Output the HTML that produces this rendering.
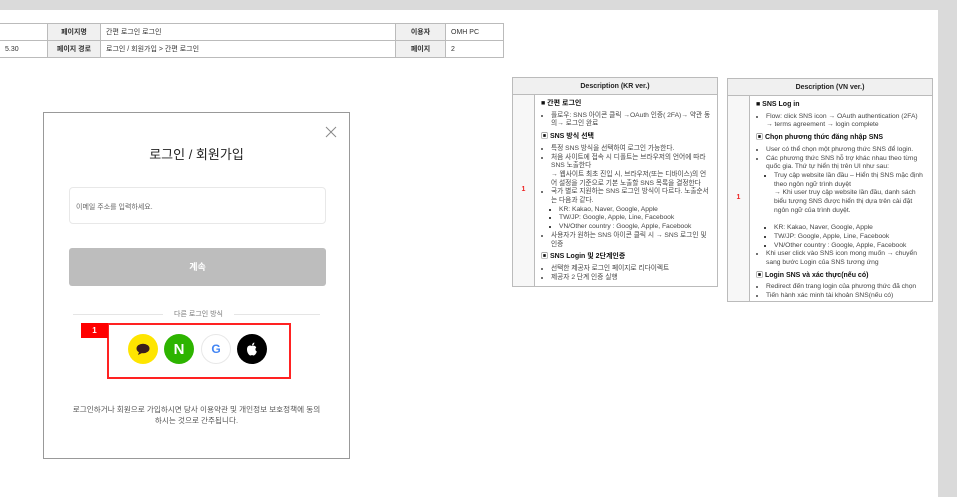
<!DOCTYPE html>
<html><head><meta charset="utf-8">
<style>
*{margin:0;padding:0;box-sizing:border-box}
body{width:957px;height:497px;overflow:hidden;background:#fff;position:relative;font-family:"Liberation Sans","Noto Sans CJK KR",sans-serif;color:#333}
.abs{position:absolute}
table.hd{position:absolute;left:-1px;top:23px;border-collapse:collapse;font-size:7px}
table.hd td{border:1px solid #bbb;height:17px;padding:0 5px;white-space:nowrap}
table.hd td.h{background:#f0f0f0;font-weight:bold;text-align:center}
.box{position:absolute;border:1px solid #bbb;background:#fff;font-size:6.7px;line-height:8.7px;color:#444}
.box .t{height:17px;background:#f0f0f0;border-bottom:1px solid #bbb;text-align:center;font-weight:bold;font-size:7px;line-height:17px;color:#222}
.box .n{position:absolute;left:0;top:17px;bottom:0;width:22px;border-right:1px solid #bbb;background:#f7f7f7;color:#e22;font-weight:bold;font-size:7px;display:flex;align-items:center;justify-content:center}
.box .c{position:absolute;left:28px;top:22px;right:6px}
.box b{display:block;font-size:7px;color:#111;margin:0 0 3px}
.box ul{margin:0 0 4px 10px;list-style:disc}
.box ul ul{margin:0 0 0 8px}
.ic{position:absolute;width:30px;height:30px;border-radius:50%;top:334px;display:flex;align-items:center;justify-content:center}
</style></head><body>
<div class="abs" style="left:0;top:0;width:957px;height:10px;background:#dadada"></div>
<div class="abs" style="left:938px;top:0;width:19px;height:497px;background:#dadada"></div>
<table class="hd">
<tr><td style="width:48px"></td><td class="h" style="width:53px">페이지명</td><td style="width:295px">간편 로그인 로그인</td><td class="h" style="width:50px">이용자</td><td style="width:58px">OMH PC</td></tr>
<tr><td>5.30</td><td class="h">페이지 경로</td><td>로그인 / 회원가입 &gt; 간편 로그인</td><td class="h">페이지</td><td>2</td></tr>
</table>

<div class="abs" style="left:43px;top:112px;width:307px;height:347px;border:1px solid #999;background:#fff"></div>
<svg class="abs" style="left:325px;top:126px" width="12" height="12"><path d="M1 1L11 11M11 1L1 11" stroke="#888" stroke-width="1"/></svg>
<div class="abs" style="left:43px;top:144px;width:307px;text-align:center;font-size:13px;color:#222">로그인 / 회원가입</div>
<div class="abs" style="left:69px;top:187px;width:257px;height:37px;border:1px solid #e8e8e8;border-radius:4px;font-size:7px;color:#666;padding:14px 6px">이메일 주소를 입력하세요.</div>
<div class="abs" style="left:69px;top:248px;width:257px;height:38px;background:#bdbdbd;border-radius:3px;color:#fff;font-weight:bold;font-size:9px;text-align:center;line-height:38px">계속</div>
<div class="abs" style="left:73px;top:314px;width:90px;height:1px;background:#e5e5e5"></div>
<div class="abs" style="left:234px;top:314px;width:86px;height:1px;background:#e5e5e5"></div>
<div class="abs" style="left:163px;top:309px;width:71px;text-align:center;font-size:7px;color:#777">다른 로그인 방식</div>
<div class="abs" style="left:107px;top:323px;width:184px;height:56px;border:2px solid #f22"></div>
<div class="abs" style="left:81px;top:323px;width:27px;height:15px;background:#f00;color:#fff;font-weight:bold;font-size:8px;line-height:15px;text-align:center">1</div>
<div class="ic" style="left:128px;background:#fee500"><svg width="14" height="12"><ellipse cx="7" cy="5.5" rx="6.5" ry="4.8" fill="#3a1d1d"/><path d="M3 9l-1 3 4-2z" fill="#3a1d1d"/></svg></div>
<div class="ic" style="left:164px;background:#2db400;color:#fff;font-weight:bold;font-size:15px">N</div>
<div class="ic" style="left:201px;background:#fff;border:1px solid #e8e8e8;font-weight:bold;font-size:12px"><span style="color:#4285f4">G</span></div>
<div class="ic" style="left:237px;background:#000"><svg width="12" height="14" viewBox="0 0 12 14"><path d="M6 4C4 3 1 3.5 1 7.5c0 3 2 6 3.5 6 1 0 1-.5 1.5-.5s.5.5 1.5.5c1.5 0 3-2.5 3.3-4-1.5-.7-2-2.7-.5-4C9.5 4.2 8 3 6 4z M6 3.5C6 2 7 .8 8.3.5 8.5 2 7.3 3.5 6 3.5z" fill="#fff"/></svg></div>
<div class="abs" style="left:43px;top:405px;width:307px;text-align:center;font-size:7.6px;line-height:10.5px;color:#555">로그인하거나 회원으로 가입하시면 당사 이용약관 및 개인정보 보호정책에 동의<br>하시는 것으로 간주됩니다.</div>

<div class="box" style="left:512px;top:77px;width:206px;height:210px">
<div class="t">Description (KR ver.)</div><div class="n">1</div>
<div class="c">
<b>■ 간편 로그인</b>
<ul><li>플로우: SNS 아이콘 클릭 →OAuth 인증( 2FA)→ 약관 동의→ 로그인 완료</li></ul>
<b>▣ SNS 방식 선택</b>
<ul><li>특정 SNS 방식을 선택하여 로그인 가능한다.</li><li>처음 사이트에 접속 시 디폴트는 브라우저의 언어에 따라 SNS 노출한다<br>→ 웹사이트 최초 진입 시, 브라우저(또는 디바이스)의 언어 설정을 기준으로 기본 노출할 SNS 목록을 결정한다</li><li>국가 별로 지원하는 SNS 로그인 방식이 다르다. 노출순서는 다음과 같다.<ul style="list-style:square"><li>KR: Kakao, Naver, Google, Apple</li><li>TW/JP: Google, Apple, Line, Facebook</li><li>VN/Other country : Google, Apple, Facebook</li></ul></li><li>사용자가 원하는 SNS 아이콘 클릭 시 → SNS 로그인 및 인증</li></ul>
<b>▣ SNS Login 및 2단계인증</b>
<ul><li>선택한 제공자 로그인 페이지로 리다이렉트</li><li>제공자 2 단계 인증 실행</li></ul>
</div></div>

<div class="box" style="left:727px;top:78px;width:206px;height:224px">
<div class="t">Description (VN ver.)</div><div class="n">1</div>
<div class="c">
<b>■ SNS Log in</b>
<ul><li>Flow: click SNS icon → OAuth authentication (2FA) → terms agreement → login complete</li></ul>
<b>▣ Chọn phương thức đăng nhập SNS</b>
<ul><li>User có thể chọn một phương thức SNS để login.</li><li>Các phương thức SNS hỗ trợ khác nhau theo từng quốc gia. Thứ tự hiển thị trên UI như sau:<ul style="list-style:square"><li>Truy cập website lần đầu – Hiển thị SNS mặc định theo ngôn ngữ trình duyệt<br>→ Khi user truy cập website lần đầu, danh sách biểu tượng SNS được hiển thị dựa trên cài đặt ngôn ngữ của trình duyệt.<br><br></li><li>KR: Kakao, Naver, Google, Apple</li><li>TW/JP: Google, Apple, Line, Facebook</li><li>VN/Other country : Google, Apple, Facebook</li></ul></li><li>Khi user click vào SNS icon mong muốn → chuyển sang bước Login của SNS tương ứng</li></ul>
<b>▣ Login SNS và xác thực(nếu có)</b>
<ul><li>Redirect đến trang login của phương thức đã chọn</li><li>Tiến hành xác minh tài khoản SNS(nếu có)</li></ul>
</div></div>
</body></html>
